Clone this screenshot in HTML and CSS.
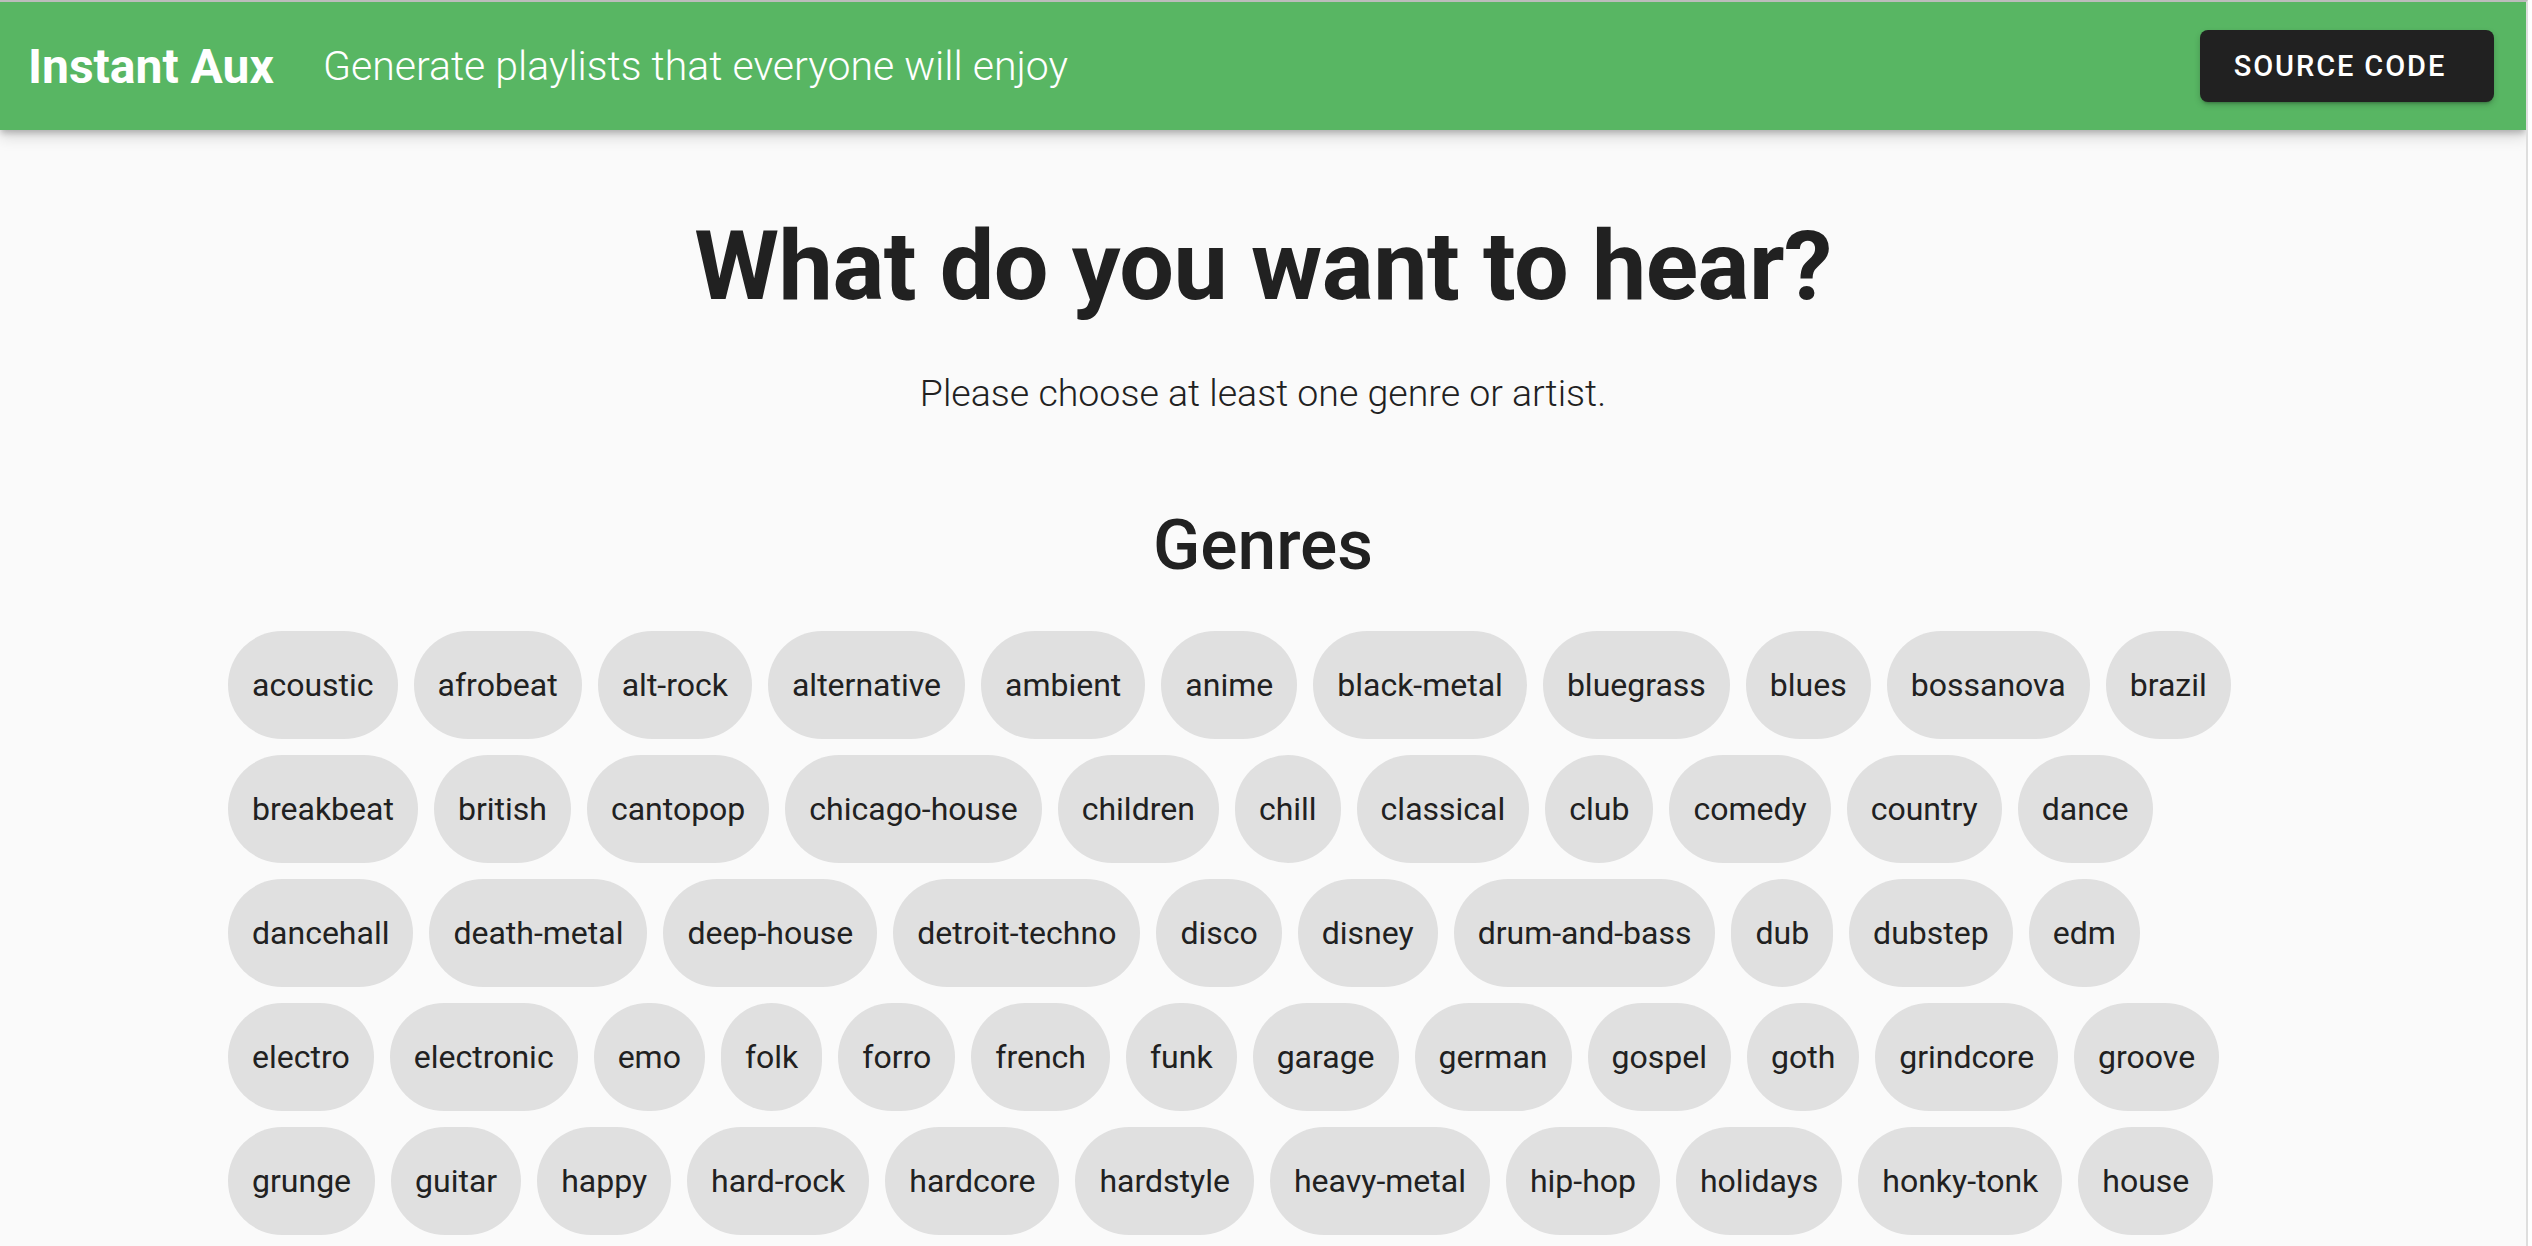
FILE: index.html
```html
<!DOCTYPE html>
<html lang="en">
<head>
<meta charset="utf-8">
<title>Instant Aux</title>
<link rel="stylesheet" href="styles.css">
</head>
<body>
<div class="app">
  <header class="appbar">
    <div class="brand">Instant Aux</div>
    <div class="tagline">Generate playlists that everyone will enjoy</div>
    <a class="source-btn" href="#">Source Code</a>
  </header>
  <main class="content">
    <h1 class="title">What do you want to hear?</h1>
    <p class="hint">Please choose at least one genre or artist.</p>
    <h2 class="section-title">Genres</h2>
    <div class="chips">
      <span class="chip">acoustic</span><span class="chip">afrobeat</span><span class="chip">alt-rock</span><span class="chip">alternative</span><span class="chip">ambient</span><span class="chip">anime</span><span class="chip">black-metal</span><span class="chip">bluegrass</span><span class="chip">blues</span><span class="chip">bossanova</span><span class="chip">brazil</span>
      <span class="chip">breakbeat</span><span class="chip">british</span><span class="chip">cantopop</span><span class="chip">chicago-house</span><span class="chip">children</span><span class="chip">chill</span><span class="chip">classical</span><span class="chip">club</span><span class="chip">comedy</span><span class="chip">country</span><span class="chip">dance</span>
      <span class="chip">dancehall</span><span class="chip">death-metal</span><span class="chip">deep-house</span><span class="chip">detroit-techno</span><span class="chip">disco</span><span class="chip">disney</span><span class="chip">drum-and-bass</span><span class="chip">dub</span><span class="chip">dubstep</span><span class="chip">edm</span>
      <span class="chip">electro</span><span class="chip">electronic</span><span class="chip">emo</span><span class="chip">folk</span><span class="chip">forro</span><span class="chip">french</span><span class="chip">funk</span><span class="chip">garage</span><span class="chip">german</span><span class="chip">gospel</span><span class="chip">goth</span><span class="chip">grindcore</span><span class="chip">groove</span>
      <span class="chip">grunge</span><span class="chip">guitar</span><span class="chip">happy</span><span class="chip">hard-rock</span><span class="chip">hardcore</span><span class="chip">hardstyle</span><span class="chip">heavy-metal</span><span class="chip">hip-hop</span><span class="chip">holidays</span><span class="chip">honky-tonk</span><span class="chip">house</span>
    </div>
  </main>
</div>
</body>
</html>
```
FILE: styles.css
```css
html, body {
  margin: 0;
  padding: 0;
  background: #ffffff;
  height: 100%;
  overflow: hidden;
}

.app {
  box-sizing: border-box;
  width: 2528px;
  height: 100%;
  background: #fafafa;
  border-top: 2px solid #bcbcbc;
  border-right: 2px solid #dedede;
  font-family: Roboto, "Noto Sans", "Liberation Sans", sans-serif;
  color: #212121;
  overflow: hidden;
}

.appbar {
  display: flex;
  align-items: center;
  height: 128px;
  padding: 0 32px 0 28px;
  background: #58b663;
  color: #ffffff;
  box-shadow: 0 4px 6px -1px rgba(0, 0, 0, 0.22), 0 7px 14px 1px rgba(0, 0, 0, 0.12);
  position: relative;
  z-index: 1;
}

.brand {
  font-size: 48px;
  font-weight: 700;
}

.tagline {
  margin-left: 49px;
  font-size: 41px;
  font-weight: 300;
  flex: 1;
}

.source-btn {
  box-sizing: border-box;
  display: flex;
  align-items: center;
  justify-content: center;
  width: 294px;
  height: 72px;
  padding-right: 14px;
  border-radius: 8px;
  background: #212121;
  color: #ffffff;
  text-decoration: none;
  text-transform: uppercase;
  font-size: 29px;
  font-weight: 500;
  letter-spacing: 1.9px;
  box-shadow: 0 3px 3px -2px rgba(0, 0, 0, 0.25), 0 3px 6px 0 rgba(0, 0, 0, 0.18);
}

.content {
  padding: 88px 0 0;
  text-align: center;
}

.title {
  margin: 0;
  font-size: 97px;
  line-height: 1;
  font-weight: 700;
  letter-spacing: -0.5px;
}

.hint {
  margin: 60px 0 0;
  font-size: 37.5px;
  line-height: 1;
  font-weight: 300;
}

.section-title {
  margin: 98px 0 0;
  font-size: 69.5px;
  line-height: 1;
  font-weight: 500;
}

.chips {
  display: flex;
  flex-wrap: wrap;
  gap: 16px;
  margin-top: 51px;
  padding: 0 260px 0 228px;
  text-align: left;
}

.chip {
  display: inline-flex;
  align-items: center;
  height: 108px;
  padding: 0 24px;
  border-radius: 54px;
  background: #e0e0e0;
  color: #212121;
  font-size: 32px;
  line-height: 1;
  white-space: nowrap;
}
```
